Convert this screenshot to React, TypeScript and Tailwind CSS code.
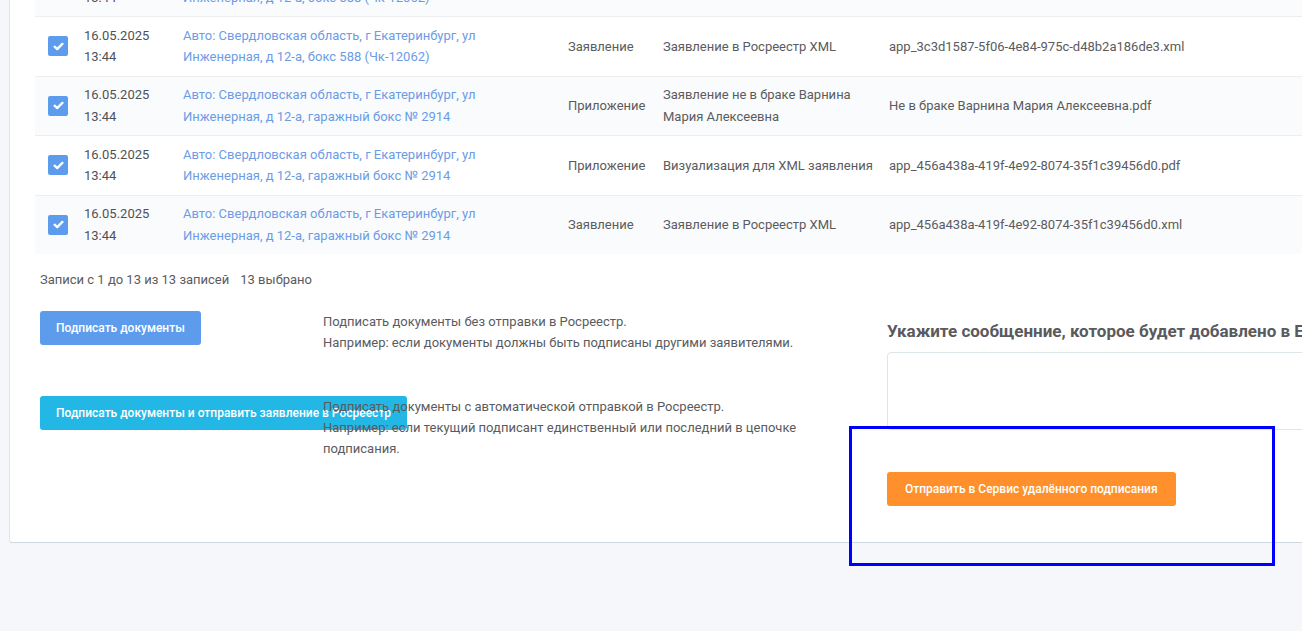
import React from "react";

interface DocRow {
  addr: string[];
  type: string;
  name: string[];
  file: string;
}

const ADDR_588 = ["Авто: Свердловская область, г Екатеринбург, ул", "Инженерная, д 12-а, бокс 588 (Чк-12062)"];
const ADDR_2914 = ["Авто: Свердловская область, г Екатеринбург, ул", "Инженерная, д 12-а, гаражный бокс № 2914"];

const rows: DocRow[] = [
  { addr: ADDR_588, type: "Приложение", name: ["Визуализация для XML заявления"], file: "app_3c3d1587-5f06-4e84-975c-d48b2a186de3.pdf" },
  { addr: ADDR_588, type: "Заявление", name: ["Заявление в Росреестр XML"], file: "app_3c3d1587-5f06-4e84-975c-d48b2a186de3.xml" },
  { addr: ADDR_2914, type: "Приложение", name: ["Заявление не в браке Варнина", "Мария Алексеевна"], file: "Не в браке Варнина Мария Алексеевна.pdf" },
  { addr: ADDR_2914, type: "Приложение", name: ["Визуализация для XML заявления"], file: "app_456a438a-419f-4e92-8074-35f1c39456d0.pdf" },
  { addr: ADDR_2914, type: "Заявление", name: ["Заявление в Росреестр XML"], file: "app_456a438a-419f-4e92-8074-35f1c39456d0.xml" },
];

const Check = () => (
  <span className="flex h-[20px] w-[20px] items-center justify-center rounded-[2px] bg-[#5d9cec]">
    <svg width="11" height="9" viewBox="0 0 11 9" fill="none">
      <path d="M1.6 4.7 4.2 7.1 9.4 1.9" stroke="white" strokeWidth="2.3" strokeLinecap="round" strokeLinejoin="round" />
    </svg>
  </span>
);

const Lines = ({ lines }: { lines: string[] }) => (
  <>
    {lines.map((l, i) => (
      <span key={i} className="block whitespace-nowrap">
        {l}
      </span>
    ))}
  </>
);

export default function App() {
  return (
    <div className="relative h-[631px] w-full overflow-hidden bg-[#f5f7fa] font-['Roboto','Liberation_Sans',sans-serif] text-[13px] text-[#5a5b5e]">
      <div className="-mt-[44.5px] w-[1700px] pl-[9px]">
        <div className="rounded-[3px] border border-[#dfe5ea] border-b-[#cfd9e1] bg-white pb-[36px]">
          {/* Documents table */}
          <div className="pl-[25px]">
            <table className="w-[1500px] table-fixed border-collapse">
              <colgroup>
                <col className="w-[37px]" />
                <col className="w-[99px]" />
                <col className="w-[385px]" />
                <col className="w-[95px]" />
                <col className="w-[226px]" />
                <col />
              </colgroup>
              <tbody>
                {rows.map((r, i) => (
                  <tr key={i} className={i % 2 === 0 ? "bg-[#fafbfc]" : "bg-white"}>
                    <td className="border-t border-[#eceef1] py-[7.75px] pl-[13px] align-middle leading-[21.5px]">
                      <Check />
                    </td>
                    <td className="border-t border-[#eceef1] py-[7.75px] pl-[12px] align-middle leading-[21.5px] text-[#505154]">
                      <Lines lines={["16.05.2025", "13:44"]} />
                    </td>
                    <td className="border-t border-[#eceef1] py-[7.75px] pl-[12px] align-middle leading-[21.5px] text-[#6b9ce6]">
                      <Lines lines={r.addr} />
                    </td>
                    <td className="border-t border-[#eceef1] py-[7.75px] pl-[12px] align-middle leading-[21.5px]">
                      {r.type}
                    </td>
                    <td className="border-t border-[#eceef1] py-[7.75px] pl-[12px] align-middle leading-[21.5px]">
                      <Lines lines={r.name} />
                    </td>
                    <td className="border-t border-[#eceef1] py-[7.75px] pl-[12px] align-middle leading-[21.5px]">
                      {r.file}
                    </td>
                  </tr>
                ))}
              </tbody>
            </table>
          </div>

          {/* Table info */}
          <div className="flex pl-[30px] pt-[14.5px] leading-[21px]">
            <span>Записи с 1 до 13 из 13 записей</span>
            <span className="ml-[11px]">13 выбрано</span>
          </div>

          {/* Actions */}
          <div className="mt-[21.5px] flex items-start pl-[30px]">
            <div className="flex w-[847px] flex-col gap-[43px]">
              <div className="flex items-start">
                <div className="w-[283px] shrink-0 whitespace-nowrap">
                  <button className="h-[34px] rounded-[3px] bg-[#5d9cec] px-[16px] text-[12px] font-medium text-white">
                    Подписать документы
                  </button>
                </div>
                <p className="leading-[21px]">
                  Подписать документы без отправки в Росреестр.
                  <br />
                  Например: если документы должны быть подписаны другими заявителями.
                </p>
              </div>
              <div className="flex items-start">
                <div className="w-[283px] shrink-0 whitespace-nowrap">
                  <button className="h-[34px] rounded-[3px] bg-[#23b7e5] px-[16px] text-[12px] font-medium text-white">
                    Подписать документы и отправить заявление в Росреестр
                  </button>
                </div>
                <p className="leading-[21px]">
                  Подписать документы с автоматической отправкой в Росреестр.
                  <br />
                  Например: если текущий подписант единственный или последний в цепочке
                  <br />
                  подписания.
                </p>
              </div>
            </div>

            <div className="w-[700px] pt-[9.5px]">
              <h4 className="whitespace-nowrap text-[17px] font-bold leading-[21px] text-[#595a5d]">
                Укажите сообщенние, которое будет добавлено в ЕГРН
              </h4>
              <textarea className="mt-[10px] block h-[78px] w-full resize-none rounded-[4px] border border-[#dde6e9] bg-white" />
              <button className="mt-[42px] h-[34px] rounded-[3px] bg-[#ff902b] px-[18px] text-[12px] font-medium text-white">
                Отправить в Сервис удалённого подписания
              </button>
            </div>
          </div>
        </div>
      </div>

      {/* highlight frame */}
      <div className="pointer-events-none absolute left-[849px] top-[426px] h-[140px] w-[426px] border-[3px] border-[#0000ff]" />
    </div>
  );
}
